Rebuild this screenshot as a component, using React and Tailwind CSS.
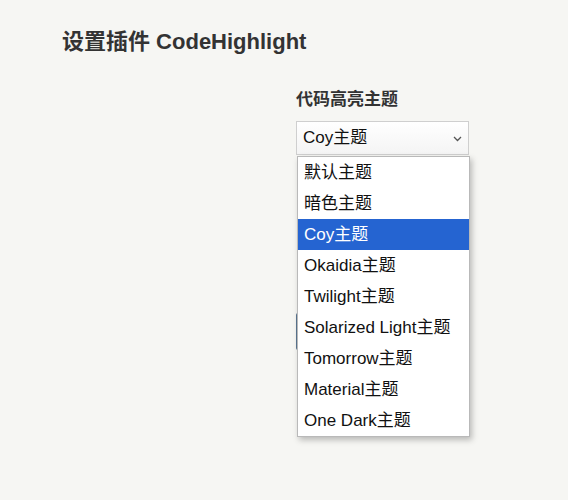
import React from 'react'

const themes = ['默认主题', '暗色主题', 'Coy主题', 'Okaidia主题', 'Twilight主题', 'Solarized Light主题', 'Tomorrow主题', 'Material主题', 'One Dark主题']

export default function App() {
    const font = { fontFamily: '"Liberation Sans", Arial, "Noto Sans CJK SC", sans-serif' }
    return (
        <div className="w-[568px] h-[500px] bg-[#f6f6f3] text-[#111] overflow-hidden" style={font}>
            <div className="pl-[62px] pt-[28px]">
                <h1 className="text-[22px] leading-[28px] font-bold text-[#333]">设置插件 CodeHighlight</h1>
            </div>

            <div className="ml-[296px] mt-[32px] w-[174px] relative">
                <label className="block text-[17px] leading-[24px] font-bold text-[#333]">代码高亮主题</label>
                <div className="mt-[9px] h-[34px] w-[173px] border border-[#cfcfcf] bg-gradient-to-b from-white to-[#f4f4f4] flex items-center justify-between pl-[6px] pr-[6px]">
                    <span className="text-[17px]">Coy主题</span>
                    <svg width="9" height="6" viewBox="0 0 9 6" className="mt-[1px]">
                        <path d="M1 1 L4.5 4.5 L8 1" fill="none" stroke="#555" strokeWidth="1.3" />
                    </svg>
                </div>

                <div className="mt-[158px] h-[37px] w-[90px] bg-[#5b7792] rounded-[2px]" />

                <ul className="absolute left-[1px] top-[68px] w-[173px] bg-white border border-[#b9b9b9] shadow-[2px_3px_6px_rgba(0,0,0,0.25)] z-10">
                    {themes.map((t) => (
                        <li
                            key={t}
                            className={
                                t === 'Coy主题'
                                    ? 'h-[31px] leading-[31px] px-[6px] text-[17px] bg-[#2564d1] text-white'
                                    : 'h-[31px] leading-[31px] px-[6px] text-[17px]'
                            }
                        >
                            {t}
                        </li>
                    ))}
                </ul>
            </div>
        </div>
    )
}
